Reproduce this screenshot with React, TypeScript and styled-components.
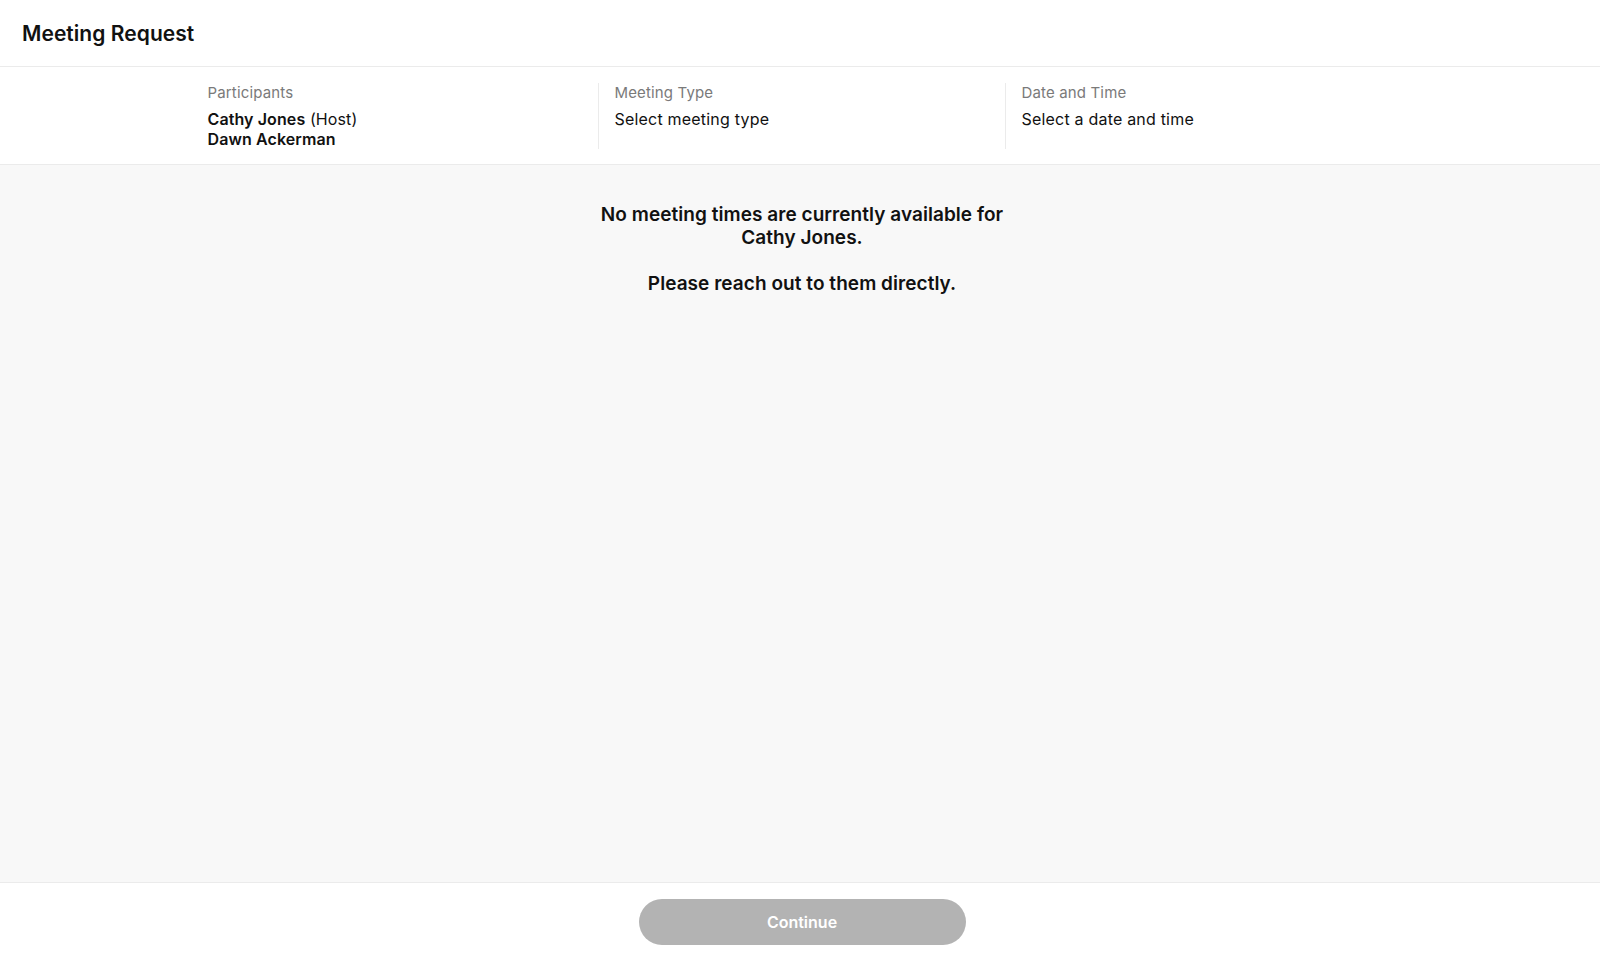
import styled, { createGlobalStyle } from "styled-components";

const GlobalStyle = createGlobalStyle`
  * {
    box-sizing: border-box;
  }

  html,
  body {
    margin: 0;
    padding: 0;
    height: 100%;
  }

  body {
    font-family: Inter, "Noto Sans", "Liberation Sans", sans-serif;
    color: #111111;
    background: #ffffff;
  }

  #root {
    height: 100%;
  }
`;

type Participant = {
  name: string;
  isHost?: boolean;
};

const participants: Participant[] = [
  { name: "Cathy Jones", isHost: true },
  { name: "Dawn Ackerman" },
];

export default function App() {
  return (
    <>
      <GlobalStyle />
      <Page>
        <Header>
          <Title>Meeting Request</Title>
        </Header>

        <Summary>
          <SummaryGrid>
            <SummaryColumn first>
              <Label>Participants</Label>
              {participants.map((p) => (
                <ParticipantName key={p.name}>
                  <strong>{p.name}</strong>
                  {p.isHost && <HostTag> (Host)</HostTag>}
                </ParticipantName>
              ))}
            </SummaryColumn>
            <SummaryColumn>
              <Label>Meeting Type</Label>
              <Value>Select meeting type</Value>
            </SummaryColumn>
            <SummaryColumn>
              <Label>Date and Time</Label>
              <Value>Select a date and time</Value>
            </SummaryColumn>
          </SummaryGrid>
        </Summary>

        <Body>
          <Message>
            <p>No meeting times are currently available for Cathy Jones.</p>
            <p>Please reach out to them directly.</p>
          </Message>
        </Body>

        <Footer>
          <ContinueButton disabled>Continue</ContinueButton>
        </Footer>
      </Page>
    </>
  );
}

const Page = styled.div`
  height: 100%;
  display: flex;
  flex-direction: column;
`;

const Header = styled.header`
  height: 67px;
  display: flex;
  align-items: center;
  padding: 0 22px;
  border-bottom: 1px solid #ebebeb;
  flex-shrink: 0;
`;

const Title = styled.h1`
  margin: 0;
  font-size: 21px;
  font-weight: 600;
  letter-spacing: 0.05px;
`;

const Summary = styled.section`
  border-bottom: 1px solid #ebebeb;
  padding: 16px 0 15px 2px;
  flex-shrink: 0;
`;

const SummaryGrid = styled.div`
  width: 1221px;
  margin: 0 auto;
  display: grid;
  grid-template-columns: repeat(3, 1fr);
`;

const SummaryColumn = styled.div<{ first?: boolean }>`
  min-height: 65px;
  padding: 0 16px;
  border-left: 1px solid ${(p) => (p.first ? "transparent" : "#ebebeb")};
  display: flex;
  flex-direction: column;
`;

const Label = styled.div`
  font-size: 15px;
  line-height: 20px;
  letter-spacing: 0.15px;
  color: #7a7a7a;
  margin-bottom: 6px;
`;

const ParticipantName = styled.div`
  font-size: 16px;
  line-height: 20px;
  letter-spacing: 0.1px;

  strong {
    font-weight: 600;
  }
`;

const HostTag = styled.span`
  font-weight: 400;
`;

const Value = styled.div`
  font-size: 16px;
  line-height: 20px;
  letter-spacing: 0.2px;
`;

const Body = styled.main`
  flex: 1;
  background: #f8f8f8;
  display: flex;
  justify-content: center;
  padding: 38px 0 0 4px;
`;

const Message = styled.div`
  max-width: 450px;
  text-align: center;
  font-size: 19px;
  font-weight: 600;
  line-height: 23px;
  letter-spacing: 0.05px;

  p {
    margin: 0 0 23px;
  }
`;

const Footer = styled.footer`
  height: 77px;
  flex-shrink: 0;
  border-top: 1px solid #ebebeb;
  display: flex;
  justify-content: center;
  padding: 16px 0 0 4px;
`;

const ContinueButton = styled.button`
  width: 327px;
  height: 46px;
  border: none;
  border-radius: 23px;
  background: #b3b3b3;
  color: #ffffff;
  font-family: inherit;
  font-size: 16px;
  font-weight: 600;
  cursor: not-allowed;
`;
